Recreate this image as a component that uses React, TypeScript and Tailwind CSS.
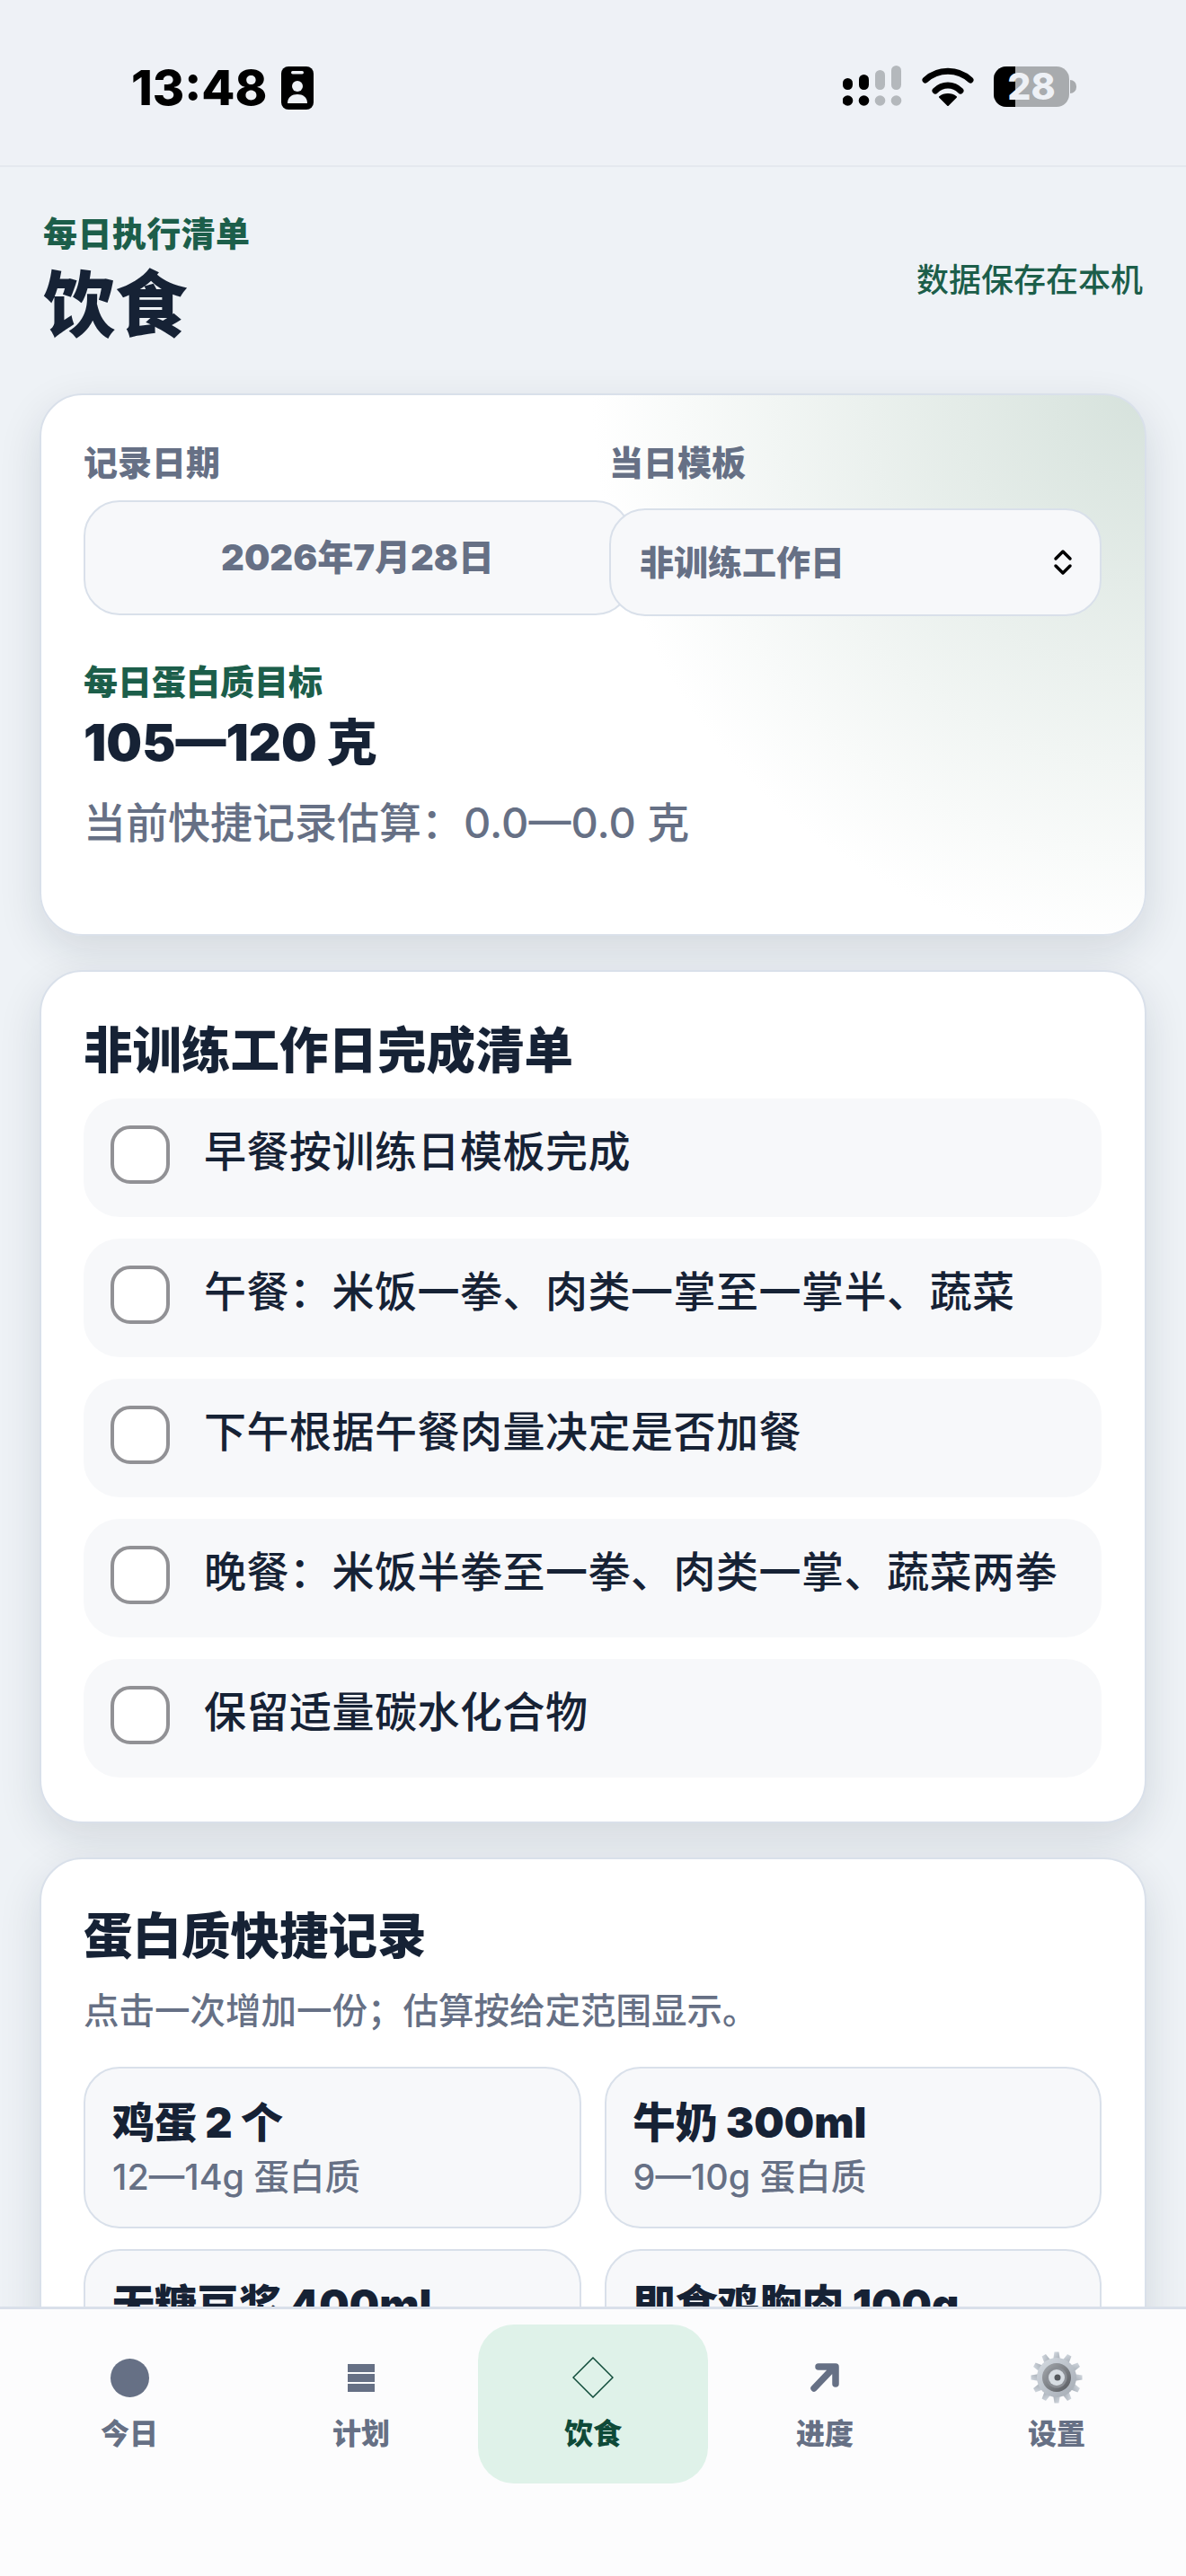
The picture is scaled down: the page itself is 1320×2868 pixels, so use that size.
const sans = "font-['Inter','Noto_Sans_CJK_SC',sans-serif]";

const checklist = [
  "早餐按训练日模板完成",
  "午餐：米饭一拳、肉类一掌至一掌半、蔬菜",
  "下午根据午餐肉量决定是否加餐",
  "晚餐：米饭半拳至一拳、肉类一掌、蔬菜两拳",
  "保留适量碳水化合物",
];

const quickItems = [
  { name: "鸡蛋 2 个", range: "12—14g 蛋白质" },
  { name: "牛奶 300ml", range: "9—10g 蛋白质" },
  { name: "无糖豆浆 400ml", range: "10—12g 蛋白质" },
  { name: "即食鸡胸肉 100g", range: "20—25g 蛋白质" },
];

function StatusBar() {
  return (
    <div className="flex h-[186px] shrink-0 items-start justify-between border-b-2 border-[#e4e8ee] bg-[#eef1f6] pl-[146px] pr-[122px] pt-[73px]">
      <div className="flex items-center gap-[16px]">
        <span className="text-[54px] leading-[50px] font-extrabold text-black">13:48</span>
        <svg width="36" height="48" viewBox="0 0 36 48">
          <rect width="36" height="48" rx="8" fill="#000" />
          <rect x="11" y="5" width="14" height="3.5" rx="1.7" fill="#eef1f6" />
          <circle cx="18" cy="22" r="6" fill="#eef1f6" />
          <path d="M7 41c0-7 5-10 11-10s11 3 11 10z" fill="#eef1f6" />
        </svg>
      </div>
      <div className="flex items-center gap-[22px]">
        <svg width="66" height="46" viewBox="0 0 66 46">
          <rect x="0" y="14" width="11" height="13" rx="5.5" fill="#000" />
          <rect x="18" y="10" width="11" height="17" rx="5.5" fill="#000" />
          <rect x="36" y="5" width="11" height="22" rx="5.5" fill="#b4b8bc" />
          <rect x="54" y="0" width="11" height="27" rx="5.5" fill="#b4b8bc" />
          <circle cx="5.5" cy="39" r="5.8" fill="#000" />
          <circle cx="23.5" cy="39" r="5.8" fill="#000" />
          <circle cx="41.5" cy="39" r="5.8" fill="#b4b8bc" />
          <circle cx="59.5" cy="39" r="5.8" fill="#b4b8bc" />
        </svg>
        <svg width="58" height="44" viewBox="0 0 58 44">
          <path d="M4 15C18 2 40 2 54 15" fill="none" stroke="#000" strokeWidth="7" strokeLinecap="round" />
          <path d="M15 27C23 19 35 19 43 27" fill="none" stroke="#000" strokeWidth="7" strokeLinecap="round" />
          <path d="M29 43L20 34C25 30 33 30 38 34Z" fill="#000" stroke="#000" strokeWidth="2" strokeLinejoin="round" />
        </svg>
        <div className="flex items-center gap-[1px]">
          <div className="relative flex h-[45px] w-[84px] items-center justify-center rounded-[14px] bg-[#a8abae]">
            <div className="absolute inset-y-0 left-0 w-[24px] rounded-l-[14px] bg-black" />
            <span className="relative text-[41px] leading-[45px] font-extrabold text-[#eef1f6]">28</span>
          </div>
          <div className="h-[15px] w-[7px] rounded-r-full bg-[#a8abae]" />
        </div>
      </div>
    </div>
  );
}

function Header() {
  return (
    <div className="flex items-center justify-between px-[48px] pt-[52px] pb-[53px]">
      <div>
        <p className="text-[38px] leading-[44px] font-black tracking-[0.4px] text-[#1c5e4a]">每日执行清单</p>
        <h1 className="mt-[11px] text-[80px] leading-[92px] font-black text-[#162235]">饮食</h1>
      </div>
      <p className="text-[36px] leading-[44px] font-medium text-[#1c5e4a]">数据保存在本机</p>
    </div>
  );
}

function SummaryCard() {
  return (
    <section className="h-[604px] rounded-[48px] border-2 border-[#d9e0ea] bg-[radial-gradient(circle_at_top_right,#d6e2dc_0%,#ffffff_45%)] pl-[47px] pr-[48px] pt-[53px] shadow-[0_16px_48px_rgba(20,34,53,0.12)]">
      <div className="flex items-start">
        <div className="w-[585px] shrink-0">
          <p className="text-[38px] leading-[44px] font-black text-[#667085]">记录日期</p>
          <div className="mt-[20px] flex h-[128px] w-[610px] items-center justify-center rounded-[40px] border-2 border-[#d9e0ea] bg-[#f7f8fa] text-[40px] font-black text-[#667085]">
            2026年7月28日
          </div>
        </div>
        <div className="relative flex-1">
          <p className="text-[38px] leading-[44px] font-black text-[#667085]">当日模板</p>
          <div className="mt-[29px] flex h-[120px] items-center justify-between rounded-[40px] border-2 border-[#d9e0ea] bg-[#f7f8fa] pl-[32px] pr-[30px] text-[38px] font-black text-[#667085]">
            非训练工作日
            <svg width="22" height="30" viewBox="0 0 22 30">
              <path d="M3 11L11 3L19 11M3 19L11 27L19 19" fill="none" stroke="#000" strokeWidth="3.5" strokeLinecap="round" strokeLinejoin="round" />
            </svg>
          </div>
        </div>
      </div>
      <p className="mt-[51px] text-[38px] leading-[44px] font-black text-[#1c5e4a]">每日蛋白质目标</p>
      <p className="mt-[12px] text-[56px] leading-[68px] font-black text-[#162235]">105—120 克</p>
      <p className="mt-[25px] text-[47px] leading-[60px] font-medium text-[#667085]">当前快捷记录估算：0.0—0.0 克</p>
    </section>
  );
}

function ChecklistCard() {
  return (
    <section className="rounded-[48px] border-2 border-[#d9e0ea] bg-white pb-[49px] pl-[47px] pr-[48px] pt-[55px] shadow-[0_16px_48px_rgba(20,34,53,0.12)]">
      <h2 className="text-[54.5px] leading-[64px] font-black text-[#162235]">非训练工作日完成清单</h2>
      <div className="mt-[22px] flex flex-col gap-[24px]">
        {checklist.map((item) => (
          <div key={item} className="flex h-[132px] items-start gap-[38px] rounded-[40px] bg-[#f7f8fa] px-[30px] pt-[30px]">
            <span className="h-[65px] w-[66px] shrink-0 rounded-[22px] border-[4px] border-[#919195] bg-white" />
            <span className="text-[47px] leading-[58px] font-medium tracking-[0.5px] text-[#162235]">{item}</span>
          </div>
        ))}
      </div>
    </section>
  );
}

function QuickCard() {
  return (
    <section className="rounded-[48px] border-2 border-[#d9e0ea] bg-white pb-[48px] pl-[47px] pr-[48px] pt-[53px] shadow-[0_16px_48px_rgba(20,34,53,0.12)]">
      <h2 className="text-[54.5px] leading-[64px] font-black text-[#162235]">蛋白质快捷记录</h2>
      <p className="mt-[26px] text-[39.5px] leading-[52px] font-medium text-[#667085]">点击一次增加一份；估算按给定范围显示。</p>
      <div className="mt-[36px] grid grid-cols-2 gap-x-[26px] gap-y-[23px]">
        {quickItems.map((q) => (
          <div key={q.name} className="h-[180px] rounded-[40px] border-2 border-[#d9e0ea] bg-[#f7f8fa] px-[30px] pt-[30px]">
            <p className="text-[47px] leading-[60px] font-black text-[#162235]">{q.name}</p>
            <p className="mt-[5px] text-[39.5px] leading-[52px] font-medium text-[#667085]">{q.range}</p>
          </div>
        ))}
      </div>
    </section>
  );
}

function Gear() {
  return (
    <svg width="60" height="60" viewBox="0 0 60 60">
      <defs>
        <linearGradient id="gearBody" x1="0" y1="0" x2="1" y2="1">
          <stop offset="0" stopColor="#d5dbe2" />
          <stop offset="1" stopColor="#a3aab3" />
        </linearGradient>
        <linearGradient id="gearRing" x1="0" y1="0" x2="1" y2="1">
          <stop offset="0" stopColor="#a6aaaf" />
          <stop offset="1" stopColor="#55585d" />
        </linearGradient>
      </defs>
      <g fill="url(#gearBody)">
        {[0, 30, 60, 90, 120, 150, 180, 210, 240, 270, 300, 330].map((a) => (
          <path key={a} d="M26 11L27.5 1.5H32.5L34 11Z" transform={`rotate(${a} 30 30)`} />
        ))}
        <circle cx="30" cy="30" r="22" />
      </g>
      <circle cx="30" cy="30" r="16" fill="url(#gearRing)" />
      <circle cx="30" cy="30" r="11.5" fill="#8b8f95" />
      <circle cx="30" cy="30" r="9" fill="#d7dde3" />
      <circle cx="31" cy="30" r="3.5" fill="#55595e" />
    </svg>
  );
}

function BottomNav() {
  const tabClass = "flex h-[177px] w-[256px] flex-col items-center pt-[24px]";
  const labelClass = "mt-[8px] text-[32px] leading-[40px] font-black text-[#667085]";
  return (
    <nav className="absolute inset-x-0 bottom-0 flex h-[300px] items-start justify-between border-t-[3px] border-[#d9e0ea] bg-[#fcfcfd] px-[16px] pt-[17px]">
      <div className={tabClass}>
        <span className="flex h-[70px] items-center">
          <span className="h-[43px] w-[43px] rounded-full bg-[#667085]" />
        </span>
        <span className={labelClass}>今日</span>
      </div>
      <div className={tabClass}>
        <span className="flex h-[70px] flex-col justify-center gap-[2px]">
          <span className="h-[9px] w-[30px] bg-[#667085]" />
          <span className="h-[9px] w-[30px] bg-[#667085]" />
          <span className="h-[9px] w-[30px] bg-[#667085]" />
        </span>
        <span className={labelClass}>计划</span>
      </div>
      <div className={`${tabClass} rounded-[40px] bg-[#dff2e9]`}>
        <span className="flex h-[70px] items-center">
          <svg width="46" height="46" viewBox="0 0 46 46">
            <path d="M23 1L45 23L23 45L1 23Z" fill="none" stroke="#0e4a38" strokeWidth="1.5" />
          </svg>
        </span>
        <span className="mt-[8px] text-[32px] leading-[40px] font-black text-[#0e4a38]">饮食</span>
      </div>
      <div className={tabClass}>
        <span className="flex h-[70px] items-center">
          <svg width="32" height="32" viewBox="0 0 32 32">
            <path d="M4 28L24 7M9 4H28V23" fill="none" stroke="#667085" strokeWidth="7.5" strokeLinecap="round" strokeLinejoin="round" />
          </svg>
        </span>
        <span className={labelClass}>进度</span>
      </div>
      <div className={tabClass}>
        <span className="flex h-[70px] items-center">
          <Gear />
        </span>
        <span className={labelClass}>设置</span>
      </div>
    </nav>
  );
}

export default function App() {
  return (
    <div className={`${sans} relative flex h-[2868px] w-[1320px] flex-col overflow-hidden bg-[#eef2f6]`}>
      <StatusBar />
      <Header />
      <main className="flex flex-col gap-[38px] px-[44px]">
        <SummaryCard />
        <ChecklistCard />
        <QuickCard />
      </main>
      <BottomNav />
    </div>
  );
}
